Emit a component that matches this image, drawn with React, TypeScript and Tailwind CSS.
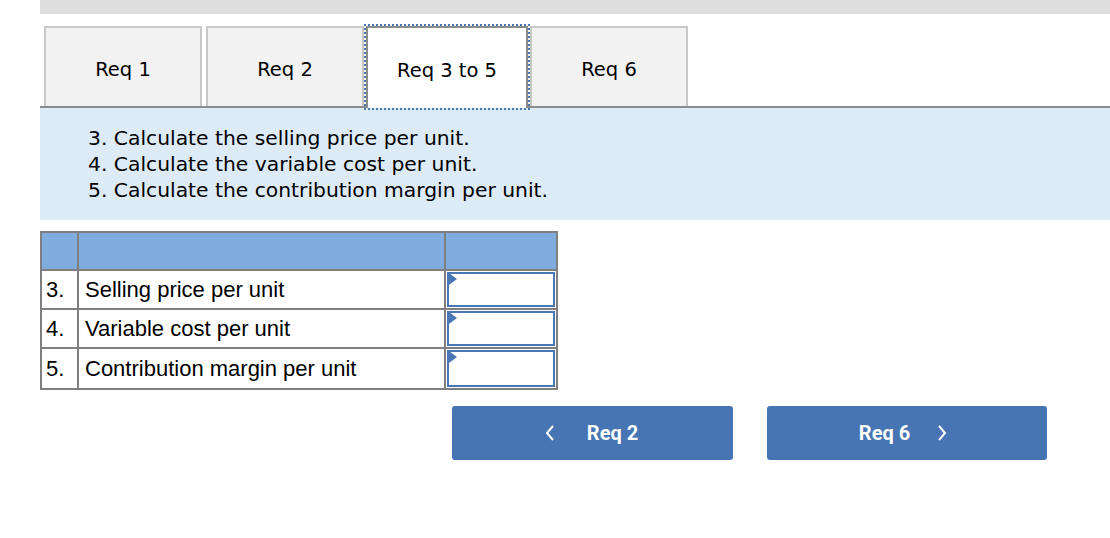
import React from 'react';

const tabs = ['Req 1', 'Req 2', 'Req 3 to 5', 'Req 6'];

const rows = [
  { n: '3.', label: 'Selling price per unit' },
  { n: '4.', label: 'Variable cost per unit' },
  { n: '5.', label: 'Contribution margin per unit' },
];

const App: React.FC = () => {
  return (
    <div className="w-[1110px] h-[538px] bg-white overflow-hidden pl-10">
      {/* top strip */}
      <div className="h-[14px] bg-[#dedede]" />

      {/* tabs */}
      <div className="mt-[12px] flex items-end border-b-2 border-[#8c8c8c] pl-1 h-[82px] font-['DejaVu_Sans',sans-serif] text-[19.5px] text-black">
        {tabs.map((t, i) =>
          i === 2 ? (
            <div
              key={t}
              className="relative mx-[2px] w-[162px] h-[82px] -mb-[2px] bg-white border-2 border-[#8c8c8c] border-b-0 flex items-center justify-center pt-[5px] outline-2 outline-dotted outline-[#4a77b4]"
            >
              {t}
            </div>
          ) : (
            <div
              key={t}
              className={`w-[158px] h-[80px] bg-[#f2f2f2] border-2 border-[#c8c8c8] border-b-0 flex items-center justify-center pt-[5px] ${i === 1 ? 'ml-1' : ''}`}
            >
              {t}
            </div>
          )
        )}
      </div>

      {/* instructions */}
      <div className="bg-[#ddebf7] h-[112px] pl-[48px] pt-[17px] font-['DejaVu_Sans',sans-serif] text-[20.3px] leading-[26px] text-black">
        <div>3. Calculate the selling price per unit.</div>
        <div>4. Calculate the variable cost per unit.</div>
        <div>5. Calculate the contribution margin per unit.</div>
      </div>

      {/* table */}
      <div className="mt-[11px] w-[518px] border-2 border-[#7f7f7f] font-['Liberation_Sans',Arial,sans-serif] text-[22px] text-black">
        <div className="flex h-[38px] bg-[#80abdf] border-b-2 border-[#7f7f7f]">
          <div className="w-[37px] border-r-2 border-[#7f7f7f]" />
          <div className="w-[367px] border-r-2 border-[#7f7f7f]" />
          <div className="flex-1" />
        </div>
        {rows.map((r, i) => (
          <div
            key={r.n}
            className={`flex h-[39px] ${i < rows.length - 1 ? 'border-b-2 border-[#7f7f7f]' : 'h-[38px]'}`}
          >
            <div className="w-[37px] border-r-2 border-[#7f7f7f] flex items-center pl-[4px]">{r.n}</div>
            <div className="w-[367px] border-r-2 border-[#7f7f7f] flex items-center pl-[6px]">{r.label}</div>
            <div className="flex-1 p-[1px]">
              <div className="relative h-full border-2 border-[#4a77b4] bg-white">
                <div className="absolute left-0 top-[-1px] w-0 h-0 border-t-[6px] border-b-[6px] border-l-[8px] border-t-transparent border-b-transparent border-l-[#4a77b4]" />
              </div>
            </div>
          </div>
        ))}
      </div>

      {/* nav buttons */}
      <div className="mt-[16px] ml-[412px] flex gap-[34px] font-['Roboto',sans-serif] text-[20px] font-bold text-white">
        <button className="w-[281px] h-[54px] rounded-[3px] bg-[#4774b2] flex items-center justify-center gap-[32px] pr-[2px]">
          <svg width="10" height="16" viewBox="0 0 10 16" fill="none" stroke="white" strokeWidth="2">
            <path d="M8 1 L2 8 L8 15" />
          </svg>
          <span>Req 2</span>
        </button>
        <button className="w-[280px] h-[54px] rounded-[3px] bg-[#4774b2] flex items-center justify-center gap-[27px] pr-[8px]">
          <span>Req 6</span>
          <svg width="10" height="16" viewBox="0 0 10 16" fill="none" stroke="white" strokeWidth="2">
            <path d="M2 1 L8 8 L2 15" />
          </svg>
        </button>
      </div>
    </div>
  );
};

export default App;
